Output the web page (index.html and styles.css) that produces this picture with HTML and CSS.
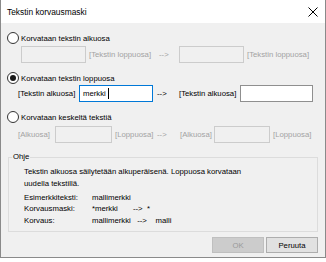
FILE: index.html
```html
<!DOCTYPE html>
<html lang="fi">
<head>
    <meta charset="UTF-8">
    <meta name="viewport" content="width=device-width, initial-scale=1.0">
    <title>Tekstin korvausmaski</title>
    <link rel="stylesheet" href="styles.css">
</head>
<body>
    <div class="dialog">
        <div class="titlebar">
            <span class="title">Tekstin korvausmaski</span>
            <svg class="close" width="10" height="10" viewBox="0 0 10 10">
                <path d="M0.5 0.5 L9.5 9.5 M9.5 0.5 L0.5 9.5" stroke="#000" stroke-width="1" fill="none"/>
            </svg>
        </div>
        <div class="content">
            <div class="radio-row">
                <span class="radio"></span>
                <span>Korvataan tekstin alkuosa</span>
            </div>
            <div class="row row-start">
                <div class="textbox disabled"></div>
                <span class="hint muted">[Tekstin loppuosa]</span>
                <span class="arrow muted">--&gt;</span>
                <div class="textbox disabled"></div>
                <span class="hint muted">[Tekstin loppuosa]</span>
            </div>

            <div class="radio-row second">
                <span class="radio checked"></span>
                <span>Korvataan tekstin loppuosa</span>
            </div>
            <div class="row row-end">
                <span class="hint">[Tekstin alkuosa]</span>
                <div class="textbox focused"><span>merkki</span><span class="caret"></span></div>
                <span class="arrow">--&gt;</span>
                <span class="hint">[Tekstin alkuosa]</span>
                <div class="textbox"></div>
            </div>

            <div class="radio-row second">
                <span class="radio"></span>
                <span>Korvataan keskeltä tekstiä</span>
            </div>
            <div class="row row-mid">
                <span class="hint muted">[Alkuosa]</span>
                <div class="textbox disabled"></div>
                <span class="hint muted">[Loppuosa]</span>
                <span class="arrow muted">--&gt;</span>
                <span class="hint muted">[Alkuosa]</span>
                <div class="textbox disabled"></div>
                <span class="hint muted">[Loppuosa]</span>
            </div>

            <fieldset class="group">
                <legend>Ohje</legend>
                <p class="help">Tekstin alkuosa säilytetään alkuperäisenä. Loppuosa korvataan<br>uudella tekstillä.</p>
                <div class="example">
                    <span>Esimerkkiteksti:</span><span>mallimerkki</span>
                    <span>Korvausmaski:</span><span class="pre">*merkki       --&gt;  *</span>
                    <span>Korvaus:</span><span class="pre">mallimerkki   --&gt;    malli</span>
                </div>
            </fieldset>

            <div class="buttons">
                <button class="btn" disabled>OK</button>
                <button class="btn">Peruuta</button>
            </div>
        </div>
    </div>
</body>
</html>
```

FILE: styles.css
```css
body {
    margin: 0;
    background-color: #fff;
    font-family: "Liberation Sans", Arial, sans-serif;
    font-size: 7.75px;
    color: #000;
}
.dialog {
    width: 326px;
    height: 258px;
    box-sizing: border-box;
    border: 1px solid #8a8a8a;
    border-top: none;
    background-color: #f0f0f0;
    display: flex;
    flex-direction: column;
}
.titlebar {
    height: 23px;
    flex-shrink: 0;
    background-color: #fff;
    display: flex;
    align-items: center;
    justify-content: space-between;
    padding: 0 7px 0 6px;
}
.title {
    font-size: 8.4px;
}
.content {
    flex: 1;
    display: flex;
    flex-direction: column;
    padding: 9px 7px 4px 6px;
}
.radio-row {
    display: flex;
    align-items: center;
    gap: 2px;
    height: 12px;
}
.radio-row.second {
    margin-top: 9px;
}
.radio {
    width: 12px;
    height: 12px;
    box-sizing: border-box;
    border: 1px solid #333;
    border-radius: 50%;
    background-color: #fff;
    display: flex;
    align-items: center;
    justify-content: center;
}
.radio.checked::after {
    content: "";
    width: 6px;
    height: 6px;
    border-radius: 50%;
    background-color: #1a1a1a;
}
.row {
    display: grid;
    align-items: center;
    height: 17px;
    white-space: nowrap;
}
.row-start {
    margin-top: 2px;
    padding-left: 14px;
    grid-template-columns: 65px 69px 24px 65px auto;
}
.row-end {
    margin-top: 1px;
    padding-left: 11px;
    grid-template-columns: 61px 74px 26px 61px 73px;
}
.row-mid {
    margin-top: 3px;
    padding-left: 11px;
    grid-template-columns: 37px 57px 41px 27px 34px 56px auto;
}
.textbox {
    height: 17px;
    box-sizing: border-box;
    border: 1px solid #8f8f8f;
    background-color: #fff;
    display: flex;
    align-items: center;
    padding-left: 3px;
}
.textbox.disabled {
    border-color: #cccccc;
    background-color: #f0f0f0;
}
.textbox.focused {
    border-color: #0078d7;
}
.caret {
    width: 1px;
    height: 11px;
    margin-left: 2px;
    background-color: #000;
}
.textbox + .hint {
    padding-left: 3px;
}
.arrow {
    padding-left: 4px;
}
.muted {
    color: #a3a3a3;
}
.group {
    margin: 8px 0 0 1px;
    padding: 3px 6px 5px 15px;
    border: 1px solid #dcdcdc;
}
.group legend {
    margin-left: -12px;
    padding: 0 1px;
    line-height: 12px;
}
.help {
    margin: 0;
    line-height: 11.5px;
}
.example {
    margin-top: 2.5px;
    display: grid;
    grid-template-columns: 68px auto;
    line-height: 11.5px;
}
.pre {
    white-space: pre;
}
.buttons {
    display: flex;
    justify-content: flex-end;
    gap: 2px;
    margin-top: 5px;
}
.btn {
    width: 52px;
    height: 16px;
    padding: 0;
    font-family: inherit;
    font-size: 7.75px;
    color: #000;
    background-color: #e1e1e1;
    border: 1px solid #adadad;
}
.btn:disabled {
    color: #9a9a9a;
    background-color: #cccccc;
    border-color: #bfbfbf;
}
```
